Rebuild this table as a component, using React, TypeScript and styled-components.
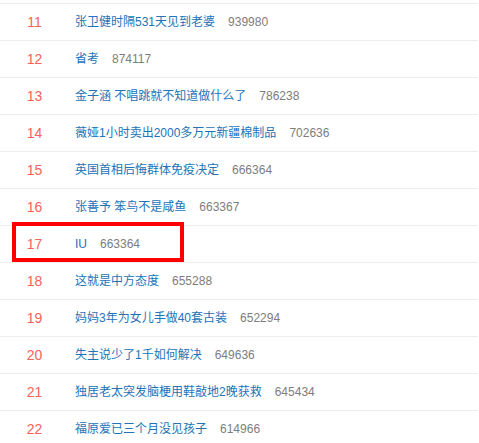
import React from "react";
import styled, { createGlobalStyle } from "styled-components";

const GlobalStyle = createGlobalStyle`
  html, body {
    margin: 0;
    padding: 0;
    background: #ffffff;
    overflow: hidden;
  }
  body {
    font-family: Arial, "Liberation Sans", "Noto Sans CJK SC", sans-serif;
    font-size: 12px;
  }
`;

const List = styled.ul`
  list-style: none;
  margin: 3px 0 0 0;
  padding: 0;
  width: 479px;
`;

const Row = styled.li`
  position: relative;
  display: flex;
  align-items: center;
  height: 36px;
  border-top: 1px solid #ececec;
  margin-right: 1px;
`;

const Rank = styled.span`
  width: 69px;
  text-align: center;
  color: #f5645a;
  font-size: 14px;
  line-height: 36px;
`;

const Title = styled.a`
  margin-left: 6px;
  color: #2273b8;
  text-decoration: none;
  font-size: 12px;
  line-height: 36px;
  white-space: nowrap;
`;

const Count = styled.span`
  margin-left: 13px;
  color: #7d7d7d;
  font-size: 12px;
  line-height: 36px;
`;

const Highlight = styled.div`
  position: absolute;
  left: 12px;
  top: -4px;
  width: 164px;
  height: 32px;
  border: 4px solid #ff0000;
  pointer-events: none;
`;

type Item = { rank: number; title: string; count: string; marked?: boolean };

const items: Item[] = [
  { rank: 11, title: "张卫健时隔531天见到老婆", count: "939980" },
  { rank: 12, title: "省考", count: "874117" },
  { rank: 13, title: "金子涵 不唱跳就不知道做什么了", count: "786238" },
  { rank: 14, title: "薇娅1小时卖出2000多万元新疆棉制品", count: "702636" },
  { rank: 15, title: "英国首相后悔群体免疫决定", count: "666364" },
  { rank: 16, title: "张善予 笨鸟不是咸鱼", count: "663367" },
  { rank: 17, title: "IU", count: "663364", marked: true },
  { rank: 18, title: "这就是中方态度", count: "655288" },
  { rank: 19, title: "妈妈3年为女儿手做40套古装", count: "652294" },
  { rank: 20, title: "失主说少了1千如何解决", count: "649636" },
  { rank: 21, title: "独居老太突发脑梗用鞋敲地2晚获救", count: "645434" },
  { rank: 22, title: "福原爱已三个月没见孩子", count: "614966" },
];

export default function App() {
  return (
    <>
      <GlobalStyle />
      <List>
        {items.map((it) => (
          <Row key={it.rank}>
            <Rank>{it.rank}</Rank>
            <Title href="#">{it.title}</Title>
            <Count>{it.count}</Count>
            {it.marked && <Highlight />}
          </Row>
        ))}
      </List>
    </>
  );
}
